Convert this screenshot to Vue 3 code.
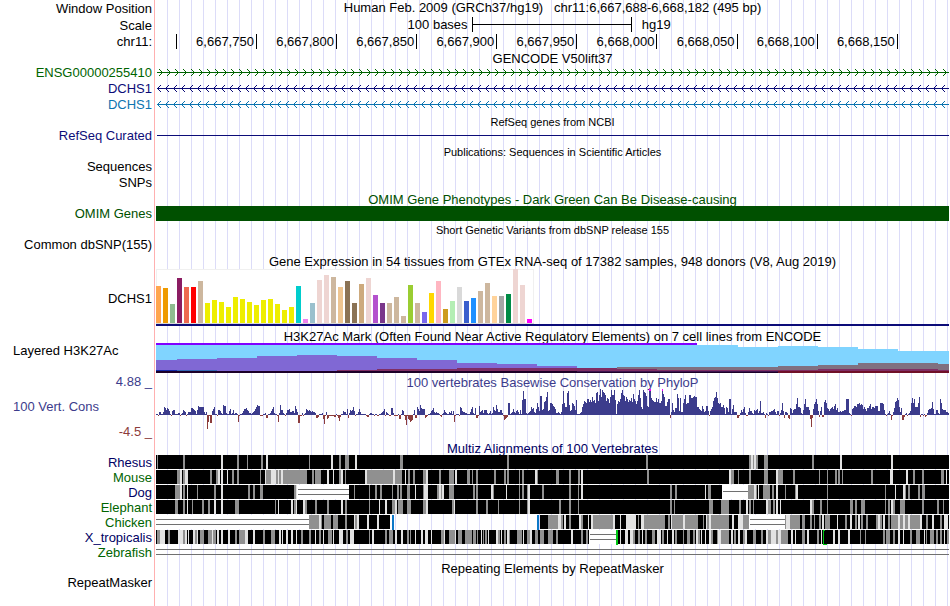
<script setup>
const plotWidth = 793

const ticks = ['', '6,667,750', '6,667,800', '6,667,850', '6,667,900', '6,667,950', '6,668,000', '6,668,050', '6,668,100', '6,668,150']

const genes = [
  { id: 1, name: 'ENSG00000255410', color: '#006400', arrow: 'M3 4L6.5 7.5L3 11' },
  { id: 2, name: 'DCHS1', color: '#0c0c78', arrow: 'M5 4L1.5 7.5L5 11' },
  { id: 3, name: 'DCHS1', color: '#0c74b0', arrow: 'M5 4L1.5 7.5L5 11' }
]

// GTEx bars: height and colour of each tissue
const heights = [
  37, 35, 19, 45, 36, 36, 42, 20, 23, 21, 16, 26, 24, 21, 18, 23, 24, 19, 13, 16, 37, 4, 20, 43, 48, 46, 36, 42,
  20, 39, 45, 28, 20, 20, 26, 7, 38, 20, 11, 30, 42, 14, 22, 36, 22, 25, 32, 40, 27, 27, 29, 54, 38, 4
]
const colors = [
  '#ffa54f', '#ee9a00', '#8fbc8f', '#8b1c62', '#ee6a50', '#ff0000', '#cdb79e',
  ...Array(13).fill('#eeee00'),
  '#00cdcd', '#ee82ee', '#9ac0cd', '#eed5d2', '#eed5d2', '#cdb79e', '#eec591', '#8b7355',
  '#8b7355', '#cdaa7d', '#eed5d2', '#b452cd', '#7a378b', '#cdb79e', '#cdb79e', '#cdb79e',
  '#9acd32', '#cdb79e', '#7a67ee', '#ffd700', '#ffb6c1', '#cd9b1d', '#b4eeb4', '#d9d9d9',
  '#3a5fcd', '#1e90ff', '#cdb79e', '#cdb79e', '#ffd39b', '#a6a6a6', '#008b45', '#eed5d2',
  '#eed5d2', '#ff00ff'
]
const tissues = heights.map((h, i) => ({ x: i * 7, h, color: colors[i] }))

// steps are [x, top], every layer is filled down to the bottom
const area = (steps) => {
  let d = `M${steps[0][0]} 30`
  steps.forEach(([x, y], i) => {
    const end = i + 1 < steps.length ? steps[i + 1][0] : plotWidth
    d += `L${x} ${y}L${end} ${y}`
  })
  return d + `L${plotWidth} 30Z`
}

const layers = [
  { color: '#80d4ff', d: area([[0, 2], [582, 4], [622, 3], [662, 4], [702, 6], [742, 8]]) },
  { color: '#8068d4', d: area([[0, 17], [21, 16], [61, 15], [101, 13], [141, 12], [181, 13], [221, 15], [261, 17], [301, 20], [341, 21], [381, 23], [421, 25]]) },
  { color: '#807080', d: area([[461, 24], [622, 23], [662, 22], [702, 20], [782, 21]]) },
  { color: '#802e64', d: area([[181, 27], [221, 26], [301, 25], [461, 26], [501, 27], [662, 26], [782, 27]]) },
  { color: '#401450', d: area([[421, 28]]) },
  { color: '#1c0028', d: area([[0, 28], [421, 29]]) },
  { color: '#701028', d: area([[622, 28]]) }
]

// conservation score for every pixel, base 36, 0 means below the axis
const scores = [
  '1103311387', '5764104551', '1122012543', '0133377654', '1598888831', '3000004681', '1055421a99', '2114612512',
  '2100112466', '7542212346', '8a99000112', '0011246821', '1002a55210', '2556334429', '6300002012', '6545434332',
  '0001112500', '3000000011', '1000111433', '1602545840', '1136311111', '0001221101', '1001123460', '3210077200',
  '0010115400', '0000000151', '3864',
  'a766610011', '2457323221', '0012532113', '2414001110', '8743322111', '3682172009', '3452555212', '412854a633',
  '55200001cc', '1236324531', '51fogg2123', '4867326c84', 'jj56dein45', 'ccb9862232', '13boc88moa', '45cb95f111',
  '238bedcggd', 'fdiefcmnek', 'qipnmkehgc', 'ipkkpf1bed', 'gmpkjeigdf', 'ehdlgebekp', 'h86pnmj98q', 'qhfeddhdgc',
  'ceoli99dgg', '03c5377lh4',
  'h33cgkbcck', 'khhijii886', '5496349940', '468ehinhcb', 'c88a71873g', 'g16a333100', '2536820037', '4421545624',
  'e223102103', '3445631440', '25c4033210', '762566bh88', '7215bg8885', '0026bdgb40', '4820dfc764', '67869b5733',
  '434455ggg2', '1067998bbc', 'aba6864779', 'b688799944', 'cccb510124', '10037dehf8', '3710012012', '4chcg888ci',
  '5110110256', '67d6115521', 'gc6555332'
].join('')

const dips = {
  51: 14, 52: 7, 54: 8, 55: 8, 82: 7, 110: 3, 111: 3, 122: 7, 142: 8, 143: 8, 160: 3, 161: 3, 162: 2, 167: 4, 168: 9,
  171: 4, 172: 3, 178: 2, 179: 2, 182: 3, 183: 6, 184: 2, 192: 3, 211: 2, 212: 2, 243: 4, 244: 4, 249: 5, 250: 10, 252: 4,
  253: 5, 254: 7, 255: 6, 256: 5, 259: 3, 260: 3, 269: 3, 270: 2, 285: 2, 298: 7, 320: 3, 321: 3, 348: 5, 349: 4, 350: 3,
  351: 2, 514: 3, 581: 3, 582: 3, 609: 3, 628: 3, 632: 3, 633: 4, 654: 4, 655: 12, 656: 3, 663: 2, 666: 2, 667: 2,
  735: 5, 746: 5, 747: 5, 748: 2, 764: 2, 769: 2
}

let up = ''
let down = ''
for (let x = 0; x < scores.length; x++) {
  const h = parseInt(scores[x], 36)
  const dip = dips[x] || 1
  if (h > 0 && !dips[x]) {
    up += `M${x} 26v${-h}h1v${h}z`
  } else {
    down += `M${x} 26v${dip}h1v${-dip}z`
  }
}

// alignment stripes: shade (g grey, l light), start, width
const stripes = (text) => text.split(' ').map(s => {
  const [x, w] = s.slice(1).split(',').map(Number)
  return { x, w, color: s[0] === 'g' ? '#909090' : '#e2e2e2' }
})

const species = [
  {
    name: 'Rhesus', color: '#000064', blocks: [[0, 793]],
    stripes: stripes('g1,1 g27,2 l65,2 g81,2 g91,1 g105,2 l110,2 g153,1 l175,2 g183,2 g189,4 l199,2 g244,3 g351,2 g490,2 g593,2 l595,2 g597,1 l598,2 g600,2 g608,4 g656,2 l684,2 l735,2')
  },
  {
    name: 'Mouse', color: '#006400', blocks: [[0, 793]],
    stripes: stripes('g21,3 l24,2 g27,2 l29,3 g54,2 g60,2 l62,2 l65,2 l71,1 g76,2 g81,2 g104,1 l109,1 g110,5 l115,5 g120,2 l122,1 g123,2 l125,2 g127,24 g156,2 g159,6 l171,2 l177,1 g183,2 l185,2 g189,1 l209,2 g211,26 l237,2 g239,7 l249,1 g252,2 g257,2 g267,3 l270,2 g283,2 g293,5 l299,2 g311,3 g316,1 g320,2 g338,2 g348,2 g351,2 g363,1 g366,2 l379,2 g381,1 g400,3 g413,2 g422,2 l425,2 g491,2 l573,2 g575,3 g582,1 g593,2 g608,4 l620,2 g622,5 g637,2 g663,1 g671,1 g679,2 g682,2 g686,1 g715,2 l734,3 l750,2 g757,2 g766,2 g785,3 l790,1')
  },
  {
    name: 'Dog', color: '#000064', blocks: [[0, 141], [193, 373], [592, 201]],
    gaps: [{ x: 142, w: 51, lines: [4, 9] }, { x: 567, w: 25, lines: [6] }],
    stripes: stripes('g19,5 l24,2 g27,2 l31,1 g41,1 g58,2 l65,2 g92,2 g97,2 g104,3 g138,2 l140,1 g198,1 g213,1 g219,2 g224,2 g236,1 g241,2 g244,2 g251,3 l259,1 g267,1 l268,4 g281,2 l283,2 g285,1 l286,2 g293,5 g317,2 g320,2 l335,2 g337,1 l350,1 g363,1 g366,2 g371,1 l372,2 g386,2 g413,2 g422,1 l425,2 g514,2 g519,2 l549,1 g552,3 g592,6 l598,2 g600,1 l602,1 g607,7 g616,2 l620,2 g629,1 g639,1 l640,2 g671,1 g729,1 l739,1 l747,2 g749,1 g752,2 g762,2 g766,3')
  },
  {
    name: 'Elephant', color: '#006400', blocks: [[0, 793]],
    stripes: stripes('g19,3 g27,2 l31,1 g36,1 g46,2 g52,2 l58,2 l65,2 g79,4 g119,1 l122,1 l135,2 g138,2 l140,1 l147,2 g149,2 g159,2 g171,2 l185,2 g189,2 g213,1 l223,1 l229,2 g236,3 l239,2 g242,5 g251,3 g254,1 g267,3 l270,2 g296,2 l298,1 g320,2 g330,2 g342,1 g363,1 g371,1 l372,2 g403,2 g413,2 g422,1 g514,2 g518,1 g553,4 g565,8 g583,2 l590,2 g593,2 g597,1 l610,2 g612,3 g617,2 l620,2 l624,1 l654,2 g656,2 g664,2 g671,1 g694,3 g699,2 g705,4 g729,1 g732,2 l735,2 g737,2 g744,5 g766,2 g781,2 g787,1')
  },
  {
    name: 'Chicken', color: '#006400', blocks: [[153, 81], [384, 209], [630, 163]],
    gaps: [{ x: 0, w: 153, lines: [4, 9] }, { x: 594, w: 35, lines: [4, 9] }],
    marks: [{ x: 236, w: 2, color: '#0c78c8' }, { x: 381, w: 2, color: '#0c78c8' }],
    stripes: stripes('g153,10 l163,2 g165,1 g168,7 g177,5 g189,2 l198,1 g199,2 l201,2 l211,2 l221,2 g392,10 l402,3 g405,2 l408,2 g413,2 l423,2 g425,2 l432,1 l435,2 g437,20 l457,2 l464,1 l470,10 g482,1 l485,3 g488,21 g512,2 l515,1 g516,8 g524,3 l527,2 g529,13 g547,1 l550,1 g551,2 l553,2 g555,18 l576,2 l582,5 g587,6 g629,1 l630,4 g634,10 g646,3 g654,2 g658,1 g663,2 l666,2 g669,5 l681,1 g689,2 l694,2 g699,2 l702,2 g705,2 g710,2 g720,2 l722,2 g724,2 l727,2 g732,2 g735,7 l742,2 g744,3 l747,2 g749,3 l752,2 g754,10 l764,2 g770,2 l776,2 g784,2 l788,4')
  },
  {
    name: 'X_tropicalis', color: '#000064', blocks: [[0, 434], [460, 333]],
    gaps: [{ x: 434, w: 26, lines: [4, 9] }],
    marks: [{ x: 460, w: 2, color: '#00c814' }, { x: 667, w: 1, color: '#00c814' }],
    stripes: stripes('g1,3 l4,5 g12,2 l22,5 g27,2 l29,2 l32,1 l37,2 g39,2 l41,1 g44,4 g52,4 l56,1 g57,3 l61,2 l65,2 l72,2 g79,2 g83,6 l89,3 l97,2 g107,2 g115,4 l123,2 l126,1 l130,2 l135,2 l140,1 g145,2 g153,2 l159,1 g163,2 l167,1 g172,4 l177,1 l183,4 g190,2 l194,4 g213,1 l216,2 g229,2 g233,4 l239,2 l245,2 g251,2 g254,1 l259,1 l265,2 l269,3 l275,1 g285,3 l288,1 g293,6 l299,1 g302,4 g309,7 g317,3 g321,1 l325,1 g327,1 g329,2 l332,1 l340,2 g342,2 l345,1 g348,2 l351,2 g353,1 g361,5 l367,1 g371,3 l374,2 g379,3 g384,4 g392,5 g400,2 l415,2 g425,2 g430,2 l433,1 l464,1 l469,3 l474,3 g477,2 g482,2 l486,1 g489,2 g496,3 l501,4 g506,2 l511,1 l516,2 g519,2 g527,1 g531,3 g537,2 l540,2 g542,2 l545,1 l549,1 l553,2 g555,2 g561,1 l562,3 g565,8 l575,2 g578,2 l582,2 g587,2 l589,2 g597,3 g605,2 l610,2 g612,3 l615,5 g620,2 l622,3 g625,7 l635,2 l639,1 g646,3 l651,2 g661,2 l665,1 l677,2 l682,2 l692,2 g704,1 g709,1 g727,2 g730,4 g737,2 l742,2 l747,1 g754,2 g760,4 l768,1 g770,1 g774,4 g780,2 g784,2 l788,1 g791,2')
  },
  { name: 'Zebrafish', color: '#006400', blocks: [], wide: [4, 9], stripes: [] }
]
</script>

<template>
  <main class="browser">
    <div class="row h17">
      <span class="label">Window Position</span>
      <h1 class="title">Human Feb. 2009 (GRCh37/hg19) &nbsp; chr11:6,667,688-6,668,182 (495 bp)</h1>
    </div>
    <div class="row h17">
      <span class="label">Scale</span>
      <div class="scale">
        <span class="scale-size">100 bases</span>
        <span class="scale-bar"></span>
        <span class="scale-db">hg19</span>
      </div>
    </div>
    <div class="row h16">
      <span class="label">chr11:</span>
      <div class="ruler">
        <span v-for="tick in ticks" :key="tick" class="tick">{{ tick }}</span>
      </div>
    </div>

    <div class="row h15"><h2 class="title">GENCODE V50lift37</h2></div>
    <div v-for="gene in genes" :key="gene.id" class="row h16">
      <span class="label" :style="{ color: gene.color }">{{ gene.name }}</span>
      <svg class="plot" height="16">
        <defs>
          <pattern :id="'arrow' + gene.id" width="8" height="16" patternUnits="userSpaceOnUse">
            <path :d="gene.arrow" fill="none" :stroke="gene.color" />
          </pattern>
        </defs>
        <rect width="100%" height="16" :fill="`url(#arrow${gene.id})`" />
        <rect x="1" y="7" width="100%" height="1" :fill="gene.color" />
      </svg>
    </div>

    <div class="row h16"><h2 class="title small">RefSeq genes from NCBI</h2></div>
    <div class="row h14">
      <span class="label blue">RefSeq Curated</span>
      <svg class="plot" height="14"><rect x="1" y="6" width="100%" height="1" fill="#0c0c78" /></svg>
    </div>

    <div class="row h16"><h2 class="title small">Publications: Sequences in Scientific Articles</h2></div>
    <div class="row h16"><span class="label">Sequences</span></div>
    <div class="row h16"><span class="label">SNPs</span></div>

    <div class="row h15"><h2 class="title omim">OMIM Gene Phenotypes - Dark Green Can Be Disease-causing</h2></div>
    <div class="row h15">
      <span class="label omim">OMIM Genes</span>
      <div class="omim-bar"></div>
    </div>

    <div class="row h16"><h2 class="title small">Short Genetic Variants from dbSNP release 155</h2></div>
    <div class="row h16"><span class="label">Common dbSNP(155)</span></div>

    <div class="row h16"><h2 class="title">Gene Expression in 54 tissues from GTEx RNA-seq of 17382 samples, 948 donors (V8, Aug 2019)</h2></div>
    <div class="row gtex">
      <span class="label">DCHS1</span>
      <svg class="plot" height="57" viewBox="0 0 793 57" preserveAspectRatio="none">
        <rect width="378" height="55" fill="#f0f0f0" />
        <rect x="1" y="1" width="376" height="53" fill="#fff" />
        <rect y="54" width="378" height="1" fill="#d8d8d8" />
        <rect v-for="t in tissues" :key="t.x" :x="t.x" :y="54 - t.h" width="5" :height="t.h" :fill="t.color" />
        <rect y="55" width="793" height="2" fill="#0c0c78" />
      </svg>
    </div>

    <div class="row h15"><h2 class="title">H3K27Ac Mark (Often Found Near Active Regulatory Elements) on 7 cell lines from ENCODE</h2></div>
    <div class="row h3k">
      <span class="label left">Layered H3K27Ac</span>
      <svg class="plot" height="30" viewBox="0 0 793 30" preserveAspectRatio="none">
        <path v-for="layer in layers" :key="layer.d" :d="layer.d" :fill="layer.color" />
        <rect width="541" height="2" fill="#8000ff" />
        <rect y="27" width="21" height="1" fill="#1428a8" />
        <rect x="21" y="27" width="40" height="1" fill="#3468b4" />
      </svg>
    </div>

    <div class="row">
      <div class="cons-labels">
        <span class="label phylo">4.88 _</span>
        <span class="label left phylo">100 Vert. Cons</span>
        <span class="label low">-4.5 _</span>
      </div>
      <div>
        <h2 class="title phylo cons-title">100 vertebrates Basewise Conservation by PhyloP</h2>
        <svg class="plot" height="52" viewBox="0 0 793 52" preserveAspectRatio="none">
          <path :d="up" fill="#3c3c8c" />
          <path :d="down" fill="#8c3c3c" />
          <rect x="493" width="2" height="2" fill="#ff00ff" />
          <rect x="506" width="1" height="2" fill="#ff00ff" />
        </svg>
      </div>
    </div>

    <div class="row h14"><h2 class="title multiz">Multiz Alignments of 100 Vertebrates</h2></div>
    <div v-for="s in species" :key="s.name" class="row h15">
      <span class="label" :style="{ color: s.color }">{{ s.name }}</span>
      <svg class="plot" height="15" viewBox="0 0 793 15" preserveAspectRatio="none">
        <rect v-for="[x, w] in s.blocks" :key="x" :x="x" :width="w" height="14" />
        <rect v-for="t in s.stripes" :key="t.x" :x="t.x" :width="t.w" height="14" :fill="t.color" />
        <template v-for="gap in s.gaps" :key="gap.x">
          <rect :x="gap.x - 1" :width="gap.w + 1" height="14" fill="#fff" />
          <rect v-for="y in gap.lines" :key="y" :x="gap.x" :y="y" :width="gap.w" height="1" fill="#707070" />
        </template>
        <rect v-for="y in s.wide" :key="y" :y="y" width="793" height="1" fill="#707070" />
        <rect v-for="m in s.marks" :key="m.x" :x="m.x" :width="m.w" height="15" :fill="m.color" />
        <path v-if="s.name === 'X_tropicalis'" d="M667 0h2v1h-2zM667 14h4v1h-4z" fill="#00c814" />
      </svg>
    </div>

    <div class="row h16"><h2 class="title">Repeating Elements by RepeatMasker</h2></div>
    <div class="row h14"><span class="label">RepeatMasker</span></div>
  </main>
</template>

<style>
body {
  margin: 0;
  background: #fff;
}
</style>

<style scoped>
.browser {
  min-height: 100vh;
  box-sizing: border-box;
  font-family: "Liberation Sans", Arial, Helvetica, sans-serif;
  font-size: 13px;
  color: #000;
  background-image:
    linear-gradient(to right, #fff 154px, #ffb0b0 154px, #ffb0b0 155px, #fff 155px, #fff 156px, transparent 156px),
    repeating-linear-gradient(to right, transparent 0, transparent 11px, #dcdcf8 11px, #dcdcf8 12px);
}

.row {
  display: grid;
  grid-template-columns: 156px minmax(0, 1fr);
  padding-right: 1px;
}

.h14 {
  height: 14px;
  line-height: 14px;
}

.h15 {
  height: 15px;
  line-height: 15px;
}

.h16 {
  height: 16px;
  line-height: 16px;
}

.h17 {
  height: 17px;
  line-height: 17px;
}

.label {
  padding-right: 4px;
  text-align: right;
  white-space: nowrap;
}

.left {
  padding-left: 13px;
  text-align: left;
}

.title {
  grid-column: 2;
  margin: 0;
  font-size: 13px;
  font-weight: 400;
  text-align: center;
  white-space: nowrap;
}

h1.title {
  line-height: 16px;
}

h2.title {
  padding-top: 1px;
}

h2.small {
  font-size: 11px;
}

.plot {
  display: block;
  width: 100%;
  shape-rendering: crispEdges;
}

.scale {
  display: grid;
  grid-template-columns: 197fr 100fr 198fr;
  line-height: 16px;
}

.scale-size {
  padding-right: 4px;
  text-align: right;
}

.scale-bar {
  height: 15px;
  border: solid #000;
  border-width: 0 1px;
  background: linear-gradient(#000, #000) center / 100% 1px no-repeat;
}

.scale-db {
  padding-left: 10px;
}

.ruler {
  display: grid;
  grid-template-columns: 13fr repeat(9, 50fr) 32fr;
}

.tick {
  height: 15px;
  padding-right: 2px;
  border-right: 1px solid #000;
  text-align: right;
}

.blue {
  color: #0c0c78;
}

.omim {
  color: #005000;
}

.omim-bar {
  background: #005000;
}

.gtex {
  height: 57px;
  margin-bottom: 2px;
  line-height: 59px;
}

.h3k {
  line-height: 15px;
}

.cons-labels {
  display: flex;
  flex-direction: column;
  justify-content: space-between;
  padding-bottom: 1px;
  line-height: 17px;
}

.cons-title {
  box-sizing: border-box;
  height: 16px;
  line-height: 18px;
}

.phylo {
  color: #3c3c8c;
}

.low {
  color: #8c3c3c;
}

.multiz {
  color: #000064;
}
</style>
